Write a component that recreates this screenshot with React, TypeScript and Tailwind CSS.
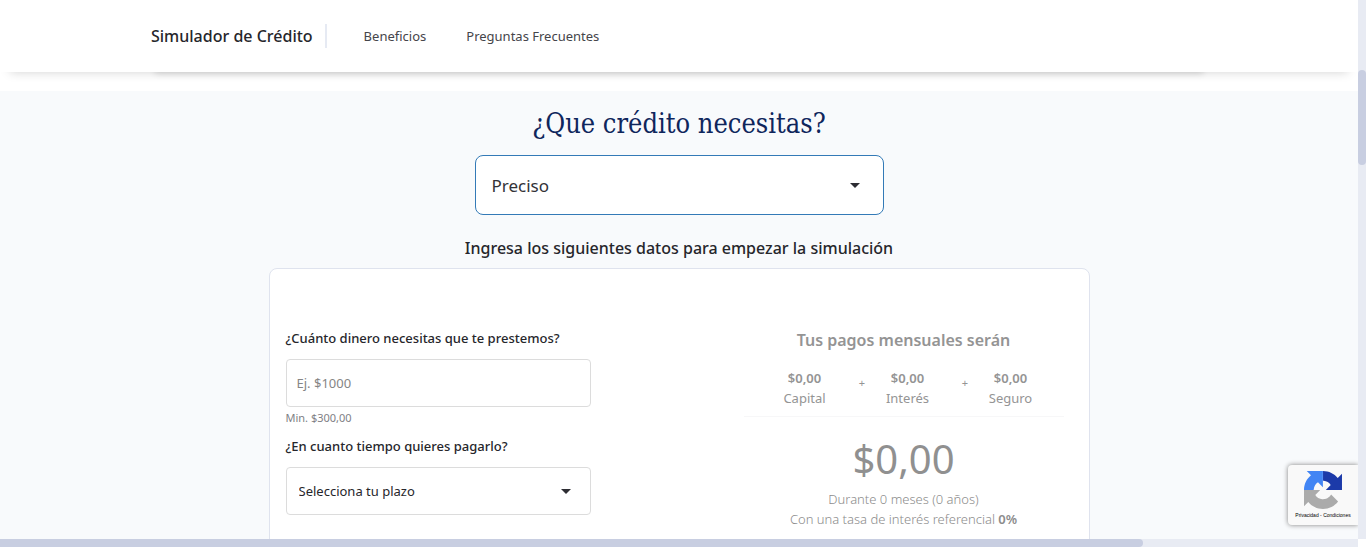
import React from "react";

function Caret() {
  return (
    <svg viewBox="0 0 10 5" className="pointer-events-none h-[5px] w-2.5 fill-[#2d2d33]" aria-hidden="true">
      <path d="M0 0h10L5 5z" />
    </svg>
  );
}

function Header() {
  return (
    <header className="relative z-10 bg-white shadow-[0_10px_10px_-10px_rgba(0,0,0,0.18)]">
      <div className="mx-auto flex h-[72px] max-w-[1056px] items-center">
        <span className="text-base font-medium text-[#26262b]">Simulador de Crédito</span>
        <span className="ml-3 h-6 w-0.5 bg-[#e6eaf3]" />
        <nav className="ml-[37px] flex gap-10 pt-px text-[13px] text-[#45454a]">
          <a href="#beneficios">Beneficios</a>
          <a href="#preguntas">Preguntas Frecuentes</a>
        </nav>
      </div>
    </header>
  );
}

function Amount({ label }: { label: string }) {
  return (
    <div className="text-[13px] leading-5">
      <p className="font-semibold">$0,00</p>
      <p>{label}</p>
    </div>
  );
}

function Plus() {
  return <span className="pl-3 text-[11px] leading-[30px]">+</span>;
}

function Summary() {
  return (
    <div className="w-80 text-center text-[#949494]">
      <h3 className="text-base font-semibold leading-6">Tus pagos mensuales serán</h3>
      <div className="mt-4 grid grid-cols-[60px_43px_60px_43px_60px] justify-center pl-2">
        <Amount label="Capital" />
        <Plus />
        <Amount label="Interés" />
        <Plus />
        <Amount label="Seguro" />
      </div>
      <hr className="mt-2 border-[#f7f7f8]" />
      <p className="mt-[18px] text-[40px] leading-[48px] text-[#909090]">$0,00</p>
      <div className="mt-1.5 text-[13px] font-light leading-5 text-[#8c8c8c]">
        <p>Durante 0 meses (0 años)</p>
        <p>
          Con una tasa de interés referencial <b className="font-semibold">0%</b>
        </p>
      </div>
    </div>
  );
}

function LoanForm() {
  return (
    <form className="mt-px w-[305px] text-[#26262b]">
      <label htmlFor="monto" className="block text-[13px] font-medium leading-[18px]">
        ¿Cuánto dinero necesitas que te prestemos?
      </label>
      <input
        id="monto"
        placeholder="Ej. $1000"
        className="mt-3 block h-12 w-full rounded border border-[#dcdcdc] bg-white px-2.5 text-[13px] placeholder:text-[#858585]"
      />
      <p className="text-[11px] leading-[22px] text-[#808085]">Min. $300,00</p>
      <label htmlFor="plazo" className="mt-2 block text-[13px] font-medium leading-[18px]">
        ¿En cuanto tiempo quieres pagarlo?
      </label>
      <div className="mt-3 grid items-center">
        <select
          id="plazo"
          className="col-start-1 row-start-1 h-12 w-full appearance-none rounded border border-[#dcdcdc] bg-white px-3 pt-0.5 text-[13px]"
        >
          <option>Selecciona tu plazo</option>
        </select>
        <span className="pointer-events-none col-start-1 row-start-1 mr-5 justify-self-end">
          <Caret />
        </span>
      </div>
    </form>
  );
}

function RecaptchaBadge() {
  return (
    <aside className="absolute bottom-3.5 right-0 z-20 flex h-[60px] w-[70px] flex-col items-center rounded-l-sm bg-[#f9f9f9] pt-1.5 shadow-[0_0_5px_gray] [clip-path:inset(-6px_0_-6px_-6px)]">
      <svg viewBox="0 0 64 64" className="h-[38px] w-[38px] shrink-0" aria-hidden="true">
        <path fill="#ababab" d="M.001 32.045l.033 1.37v25.898l7.16-7.16c5.86 7.173 14.774 11.754 24.76 11.754 10.4 0 19.622-4.96 25.458-12.64l-11.736-11.86a15.55 15.55 0 0 1-4.754 5.334c-2.05 1.6-4.952 2.906-8.968 2.906-.485 0-.86-.057-1.135-.163-4.976-.393-9.288-3.14-11.828-7.124l8.307-8.307c-10.522.04-22.4.066-27.295-.005" />
        <path fill="#4285f4" d="M31.862.094l-1.37.033H4.594l7.16 7.16C4.58 13.147 0 22.06 0 32.046h16.26c0-.485.057-.86.163-1.135.393-4.976 3.14-9.288 7.124-11.828l8.307 8.307z" />
        <path fill="#1c3aa9" d="M64 31.955l-.033-1.37V4.687l-7.16 7.16C50.948 4.674 42.033.093 32.05.093v16.26c.485 0 .86.057 1.135.163 4.976.393 9.288 3.14 11.828 7.124l-8.307 8.307z" />
      </svg>
      <p className="mt-0.5 whitespace-nowrap font-['Liberation_Sans',sans-serif] text-[5px] leading-2 text-black">
        <a href="#privacidad">Privacidad</a> - <a href="#condiciones">Condiciones</a>
      </p>
    </aside>
  );
}

export default function App() {
  return (
    <div className="grid h-screen grid-cols-[minmax(0,1fr)_8px] grid-rows-[minmax(0,1fr)_8px] bg-white font-['Noto_Sans',sans-serif]">
      <div className="relative flex flex-col overflow-hidden">
        <Header />
        <div className="h-[19px] shrink-0 bg-white">
          <div className="mx-auto -mt-2 h-2 max-w-[1048px] shadow-[0_2px_6px_rgba(0,0,0,0.12)]" />
        </div>
        <main className="flex grow flex-col items-center bg-[#f8fafc] pt-[17px]">
          <h1 className="font-['DejaVu_Serif_Condensed','DejaVu_Serif',serif] text-[27px] leading-8 text-[#0f265c]">
            <label htmlFor="credito">¿Que crédito necesitas?</label>
          </h1>
          <div className="mt-[15px] grid w-full max-w-[409px] items-center">
            <select
              id="credito"
              className="col-start-1 row-start-1 h-[60px] w-full appearance-none rounded-lg border border-[#337ab7] bg-white px-4 pt-0.5 text-[17px] text-[#323237]"
            >
              <option>Preciso</option>
            </select>
            <span className="pointer-events-none col-start-1 row-start-1 mr-6 justify-self-end">
              <Caret />
            </span>
          </div>
          <h2 className="mt-5 text-base font-medium leading-[26px] text-[#26262b]">
            Ingresa los siguientes datos para empezar la simulación
          </h2>
          <section className="mt-[7px] flex w-full max-w-[821px] items-start justify-between rounded-lg border border-[#dfe3ee] bg-white pb-8 pl-4 pr-[25px] pt-[59px]">
            <LoanForm />
            <Summary />
          </section>
        </main>
        <RecaptchaBadge />
      </div>
      <div className="bg-[#e8ebf3] pt-[70px]">
        <div className="h-[95px] rounded-full bg-[#c8cee1]" />
      </div>
      <div className="bg-[#e8ebf3]">
        <div className="h-2 w-[84.2%] rounded-r-full bg-[#c8cee1]" />
      </div>
    </div>
  );
}
